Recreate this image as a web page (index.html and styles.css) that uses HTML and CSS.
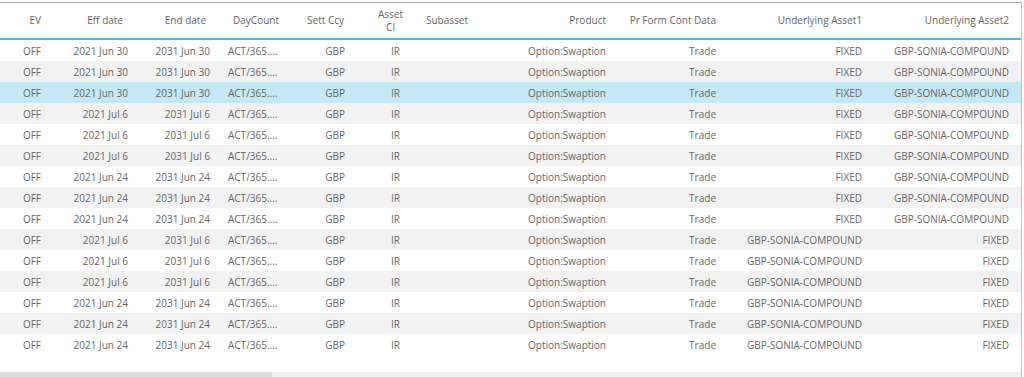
FILE: index.html
```html
<!DOCTYPE html>
<html>
<head>
<meta charset="utf-8">
<link rel="stylesheet" href="styles.css">
</head>
<body>
<div class="grid">
  <div class="head">
    <div class="c ev"><span>EV</span></div>
    <div class="c eff"><span>Eff date</span></div>
    <div class="c end"><span>End date</span></div>
    <div class="c dc"><span>DayCount</span></div>
    <div class="c ccy"><span>Sett Ccy</span></div>
    <div class="c ac"><span>Asset<br>Cl</span></div>
    <div class="c sub"><span>Subasset</span></div>
    <div class="c prod"><span>Product</span></div>
    <div class="c pf"><span>Pr Form Cont Data</span></div>
    <div class="c u1"><span>Underlying Asset1</span></div>
    <div class="c u2"><span>Underlying Asset2</span></div>
  </div>
  <div class="body">
    <div class="row"><div class="c ev">OFF</div><div class="c eff">2021 Jun 30</div><div class="c end">2031 Jun 30</div><div class="c dc">ACT/365....</div><div class="c ccy">GBP</div><div class="c ac">IR</div><div class="c sub"></div><div class="c prod">Option:Swaption</div><div class="c pf">Trade</div><div class="c u1">FIXED</div><div class="c u2">GBP-SONIA-COMPOUND</div></div>
    <div class="row alt"><div class="c ev">OFF</div><div class="c eff">2021 Jun 30</div><div class="c end">2031 Jun 30</div><div class="c dc">ACT/365....</div><div class="c ccy">GBP</div><div class="c ac">IR</div><div class="c sub"></div><div class="c prod">Option:Swaption</div><div class="c pf">Trade</div><div class="c u1">FIXED</div><div class="c u2">GBP-SONIA-COMPOUND</div></div>
    <div class="row sel"><div class="c ev">OFF</div><div class="c eff">2021 Jun 30</div><div class="c end">2031 Jun 30</div><div class="c dc">ACT/365....</div><div class="c ccy">GBP</div><div class="c ac">IR</div><div class="c sub"></div><div class="c prod">Option:Swaption</div><div class="c pf">Trade</div><div class="c u1">FIXED</div><div class="c u2">GBP-SONIA-COMPOUND</div></div>
    <div class="row alt"><div class="c ev">OFF</div><div class="c eff">2021 Jul 6</div><div class="c end">2031 Jul 6</div><div class="c dc">ACT/365....</div><div class="c ccy">GBP</div><div class="c ac">IR</div><div class="c sub"></div><div class="c prod">Option:Swaption</div><div class="c pf">Trade</div><div class="c u1">FIXED</div><div class="c u2">GBP-SONIA-COMPOUND</div></div>
    <div class="row"><div class="c ev">OFF</div><div class="c eff">2021 Jul 6</div><div class="c end">2031 Jul 6</div><div class="c dc">ACT/365....</div><div class="c ccy">GBP</div><div class="c ac">IR</div><div class="c sub"></div><div class="c prod">Option:Swaption</div><div class="c pf">Trade</div><div class="c u1">FIXED</div><div class="c u2">GBP-SONIA-COMPOUND</div></div>
    <div class="row alt"><div class="c ev">OFF</div><div class="c eff">2021 Jul 6</div><div class="c end">2031 Jul 6</div><div class="c dc">ACT/365....</div><div class="c ccy">GBP</div><div class="c ac">IR</div><div class="c sub"></div><div class="c prod">Option:Swaption</div><div class="c pf">Trade</div><div class="c u1">FIXED</div><div class="c u2">GBP-SONIA-COMPOUND</div></div>
    <div class="row"><div class="c ev">OFF</div><div class="c eff">2021 Jun 24</div><div class="c end">2031 Jun 24</div><div class="c dc">ACT/365....</div><div class="c ccy">GBP</div><div class="c ac">IR</div><div class="c sub"></div><div class="c prod">Option:Swaption</div><div class="c pf">Trade</div><div class="c u1">FIXED</div><div class="c u2">GBP-SONIA-COMPOUND</div></div>
    <div class="row alt"><div class="c ev">OFF</div><div class="c eff">2021 Jun 24</div><div class="c end">2031 Jun 24</div><div class="c dc">ACT/365....</div><div class="c ccy">GBP</div><div class="c ac">IR</div><div class="c sub"></div><div class="c prod">Option:Swaption</div><div class="c pf">Trade</div><div class="c u1">FIXED</div><div class="c u2">GBP-SONIA-COMPOUND</div></div>
    <div class="row"><div class="c ev">OFF</div><div class="c eff">2021 Jun 24</div><div class="c end">2031 Jun 24</div><div class="c dc">ACT/365....</div><div class="c ccy">GBP</div><div class="c ac">IR</div><div class="c sub"></div><div class="c prod">Option:Swaption</div><div class="c pf">Trade</div><div class="c u1">FIXED</div><div class="c u2">GBP-SONIA-COMPOUND</div></div>
    <div class="row alt"><div class="c ev">OFF</div><div class="c eff">2021 Jul 6</div><div class="c end">2031 Jul 6</div><div class="c dc">ACT/365....</div><div class="c ccy">GBP</div><div class="c ac">IR</div><div class="c sub"></div><div class="c prod">Option:Swaption</div><div class="c pf">Trade</div><div class="c u1">GBP-SONIA-COMPOUND</div><div class="c u2">FIXED</div></div>
    <div class="row"><div class="c ev">OFF</div><div class="c eff">2021 Jul 6</div><div class="c end">2031 Jul 6</div><div class="c dc">ACT/365....</div><div class="c ccy">GBP</div><div class="c ac">IR</div><div class="c sub"></div><div class="c prod">Option:Swaption</div><div class="c pf">Trade</div><div class="c u1">GBP-SONIA-COMPOUND</div><div class="c u2">FIXED</div></div>
    <div class="row alt"><div class="c ev">OFF</div><div class="c eff">2021 Jul 6</div><div class="c end">2031 Jul 6</div><div class="c dc">ACT/365....</div><div class="c ccy">GBP</div><div class="c ac">IR</div><div class="c sub"></div><div class="c prod">Option:Swaption</div><div class="c pf">Trade</div><div class="c u1">GBP-SONIA-COMPOUND</div><div class="c u2">FIXED</div></div>
    <div class="row"><div class="c ev">OFF</div><div class="c eff">2021 Jun 24</div><div class="c end">2031 Jun 24</div><div class="c dc">ACT/365....</div><div class="c ccy">GBP</div><div class="c ac">IR</div><div class="c sub"></div><div class="c prod">Option:Swaption</div><div class="c pf">Trade</div><div class="c u1">GBP-SONIA-COMPOUND</div><div class="c u2">FIXED</div></div>
    <div class="row alt"><div class="c ev">OFF</div><div class="c eff">2021 Jun 24</div><div class="c end">2031 Jun 24</div><div class="c dc">ACT/365....</div><div class="c ccy">GBP</div><div class="c ac">IR</div><div class="c sub"></div><div class="c prod">Option:Swaption</div><div class="c pf">Trade</div><div class="c u1">GBP-SONIA-COMPOUND</div><div class="c u2">FIXED</div></div>
    <div class="row"><div class="c ev">OFF</div><div class="c eff">2021 Jun 24</div><div class="c end">2031 Jun 24</div><div class="c dc">ACT/365....</div><div class="c ccy">GBP</div><div class="c ac">IR</div><div class="c sub"></div><div class="c prod">Option:Swaption</div><div class="c pf">Trade</div><div class="c u1">GBP-SONIA-COMPOUND</div><div class="c u2">FIXED</div></div>
  </div>
  <div class="hscroll"><div class="thumb"></div></div>
</div>
</body>
</html>
```

FILE: styles.css
```css
html, body {
  margin: 0;
  padding: 0;
  background: #ffffff;
  overflow: hidden;
}
body {
  font-family: "Open Sans", "Liberation Sans", sans-serif;
  font-size: 10px;
  color: #666666;
}
.grid {
  width: 1021px;
  height: 380px;
  margin-top: 2px;
  border-top: 1px solid #a9a9a9;
  border-right: 1px solid #c4c4c4;
  display: flex;
  flex-direction: column;
}
.head, .row {
  display: grid;
  grid-template-columns: 48px 87px 82px 69px 66px 68px 100px 93px 110px 146px 147px 5px;
}
.head {
  height: 35px;
  border-bottom: 2px solid #4cb6e6;
  align-items: center;
  line-height: 13px;
}
.body {
  display: flex;
  flex-direction: column;
}
.row {
  height: 21px;
  align-items: center;
  line-height: 21px;
  padding-top: 1px;
  box-sizing: border-box;
}
.row.alt { background: #f2f2f2; }
.row.sel { background: #c4e8f5; }
.c {
  white-space: nowrap;
  overflow: hidden;
  text-align: right;
  padding-right: 7px;
}
.head .eff { padding-right: 12px; }
.head .end { padding-right: 11px; }
.head .ccy { padding-right: 8px; }
.row .dc { text-align: left; padding-left: 11px; padding-right: 0; }
.head .ac { text-align: center; padding-left: 9px; padding-right: 0; }
.row .ac { text-align: left; padding-left: 39px; padding-right: 0; }
.head .sub { text-align: left; padding-left: 6px; padding-right: 0; }
.hscroll {
  margin-top: 17px;
  height: 10px;
  background: #f1f1f1;
  display: flex;
}
.thumb {
  width: 272px;
  background: #dcdcdc;
}
```
